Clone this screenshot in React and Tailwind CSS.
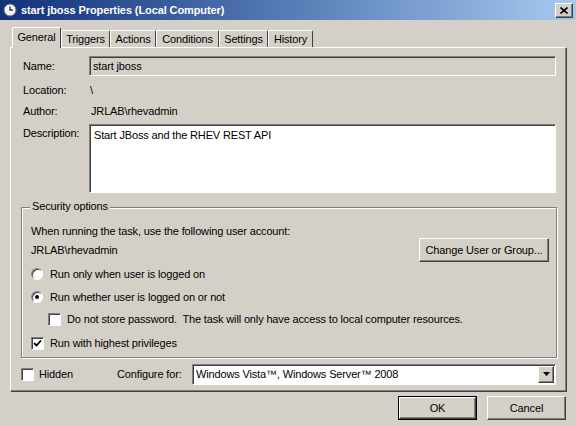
import React from 'react';

const sunken = 'border border-t-[#808080] border-l-[#808080] border-b-white border-r-white shadow-[inset_1px_1px_0_#404040]';
const raised = 'border border-t-white border-l-white border-b-[#404040] border-r-[#404040] shadow-[inset_-1px_-1px_0_#808080]';

const ClockIcon = () => (
  <svg width="14" height="14" viewBox="0 0 14 14">
    <circle cx="7" cy="7" r="6" fill="#f4f4f4" stroke="#6b6b6b" strokeWidth="1" />
    <path d="M7 3.5V7h2.8" fill="none" stroke="#333" strokeWidth="1.3" />
  </svg>
);

const Radio = ({ checked }) => (
  <span className="w-[12px] h-[12px] rounded-full bg-white border border-t-[#808080] border-l-[#808080] border-b-white border-r-white shadow-[inset_1px_1px_0_#404040] flex items-center justify-center shrink-0">
    {checked && <span className="w-[4px] h-[4px] rounded-full bg-black" />}
  </span>
);

const Check = ({ checked }) => (
  <span className={`w-[13px] h-[13px] bg-white ${sunken} flex items-center justify-center shrink-0`}>
    {checked && (
      <svg width="9" height="9" viewBox="0 0 9 9">
        <path d="M1 4l2.5 2.5L8 1.5" fill="none" stroke="#000" strokeWidth="1.8" />
      </svg>
    )}
  </span>
);

const tabs = [
  { label: 'Triggers', w: 'w-[49px]' },
  { label: 'Actions', w: 'w-[46px]' },
  { label: 'Conditions', w: 'w-[63px]' },
  { label: 'Settings', w: 'w-[49px]' },
  { label: 'History', w: 'w-[45px]' },
];

const App = () => {
  return (
    <div className="w-[576px] h-[426px] bg-[#d4d0c8] overflow-hidden text-[11px] tracking-[-0.15px] text-black font-['Liberation_Sans',sans-serif] leading-none">
      {/* title bar */}
      <div className="h-[20px] flex items-center px-[3px] bg-linear-to-r from-[#12307a] to-[#a6caf0]">
        <ClockIcon />
        <span className="ml-[4px] text-white font-bold text-[11px] tracking-[-0.1px]">start jboss Properties (Local Computer)</span>
        <div className={`ml-auto w-[18px] h-[15px] bg-[#d4d0c8] ${raised} flex items-center justify-center`}>
          <svg width="8" height="7" viewBox="0 0 8 7">
            <path d="M0.5 0.5l7 6M7.5 0.5l-7 6" stroke="#000" strokeWidth="1.6" />
          </svg>
        </div>
      </div>

      {/* tabs */}
      <div className="flex items-end h-[27px] pl-[12px] relative z-10">
        <div className="w-[49px] h-[21px] mb-[-1px] bg-[#d4d0c8] border-t border-l border-white border-r border-r-[#404040] rounded-t-[2px] flex items-center justify-center pb-[2px]">
          General
        </div>
        {tabs.map((t) => (
          <div
            key={t.label}
            className={`${t.w} h-[17px] bg-[#d4d0c8] border-t border-l border-white border-r border-r-[#404040] rounded-t-[2px] flex items-center justify-center`}
          >
            {t.label}
          </div>
        ))}
      </div>

      {/* panel */}
      <div className="ml-[10px] w-[556px] h-[344px] border border-t-white border-l-white border-b-[#808080] border-r-[#808080] shadow-[1px_1px_0_#404040] pl-[12px] pr-[9px] pt-[8px] flex flex-col">
        <div className="flex items-center h-[20px]">
          <span className="w-[66px]">Name:</span>
          <div className={`flex-1 h-[20px] ${sunken} bg-[#d4d0c8] flex items-center pl-[3px]`}>start jboss</div>
        </div>

        <div className="flex items-center h-[14px] mt-[7px]">
          <span className="w-[67px]">Location:</span>
          <span>\</span>
        </div>

        <div className="flex items-center h-[14px] mt-[7px]">
          <span className="w-[68px]">Author:</span>
          <span>JRLAB\rhevadmin</span>
        </div>

        <div className="flex mt-[6px]">
          <span className="w-[66px] pt-[4px]">Description:</span>
          <div className={`flex-1 h-[69px] ${sunken} bg-white pl-[4px] pt-[5px]`}>Start JBoss and the RHEV REST API</div>
        </div>

        {/* security options */}
        <div className="relative mt-[14px] ml-[-2px] w-[536px] h-[151px] border border-[#808080] shadow-[1px_1px_0_white,inset_1px_1px_0_white] pl-[9px] pr-[7px] pt-[16px] flex flex-col">
          <span className="absolute left-[8px] top-[-7px] px-[2px] bg-[#d4d0c8]">Security options</span>
          <div className="h-[14px] flex items-center">When running the task, use the following user account:</div>
          <div className="flex items-center justify-between">
            <span>JRLAB\rhevadmin</span>
            <div className={`w-[130px] h-[24px] ${raised} flex items-center justify-center`}>Change User or Group...</div>
          </div>
          <div className="flex items-center gap-[7px] mt-[5px] h-[14px]">
            <Radio />
            <span>Run only when user is logged on</span>
          </div>
          <div className="flex items-center gap-[7px] mt-[9px] h-[14px]">
            <Radio checked />
            <span>Run whether user is logged on or not</span>
          </div>
          <div className="flex items-center gap-[6px] mt-[8px] h-[14px] pl-[17px]">
            <Check />
            <span>Do not store password.&nbsp; The task will only have access to local computer resources.</span>
          </div>
          <div className="flex items-center gap-[6px] mt-[10px] h-[14px]">
            <Check checked />
            <span>Run with highest privileges</span>
          </div>
        </div>

        <div className="flex items-center mt-[6px] h-[20px]">
          <span className="ml-[-2px]"><Check /></span>
          <span className="ml-[5px] w-[78px]">Hidden</span>
          <span className="w-[75px]">Configure for:</span>
          <div className={`flex-1 h-[21px] ${sunken} bg-white flex items-center pl-[3px] pr-[1px]`}>
            <span className="flex-1">Windows Vista™, Windows Server™ 2008</span>
            <div className={`w-[16px] h-[17px] bg-[#d4d0c8] ${raised} flex items-center justify-center`}>
              <svg width="7" height="4" viewBox="0 0 7 4"><path d="M0 0h7L3.5 4z" fill="#000" /></svg>
            </div>
          </div>
        </div>
      </div>

      {/* buttons */}
      <div className="flex justify-end gap-[10px] pr-[10px] mt-[5px]">
        <div className="w-[79px] h-[24px] border border-black flex">
          <div className={`flex-1 ${raised} flex items-center justify-center`}>OK</div>
        </div>
        <div className={`w-[79px] h-[24px] ${raised} flex items-center justify-center`}>Cancel</div>
      </div>
    </div>
  );
};

export default App;
